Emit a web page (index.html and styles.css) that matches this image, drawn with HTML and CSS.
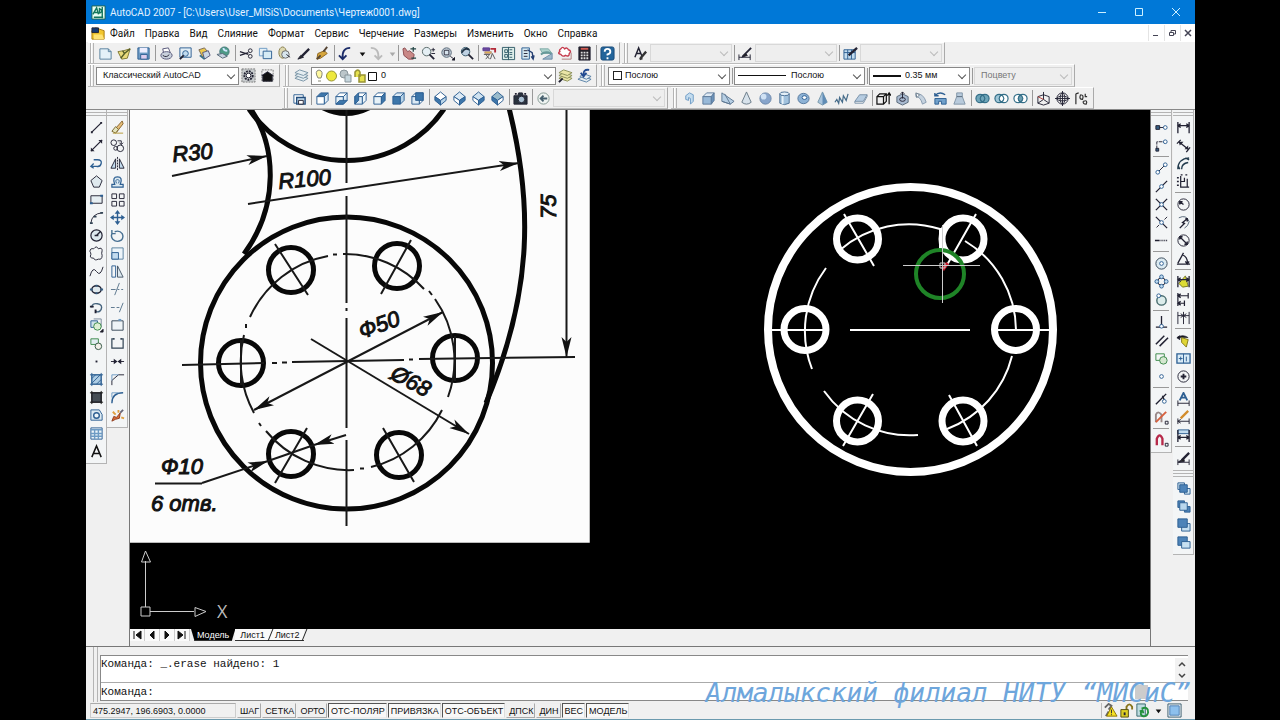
FILE: index.html
```html
<!DOCTYPE html>
<html lang="ru">
<head>
<meta charset="utf-8">
<title>AutoCAD 2007</title>
<link rel="stylesheet" href="styles.css">
</head>
<body>
<div class="app">
  <header class="titlebar">
    <span class="glyph" data-icon="app"></span>
    <h1 class="title">AutoCAD 2007 - [C:\Users\User_MISiS\Documents\Чертеж0001.dwg]</h1>
    <div class="winbtns">
      <button aria-label="Свернуть"><svg width="10" height="10"><path d="M1 5.500h8"/></svg></button>
      <button aria-label="Развернуть"><svg width="10" height="10"><path d="M1.500 1.500h7v7h-7z"/></svg></button>
      <button aria-label="Закрыть"><svg width="10" height="10"><path d="M1 1l8 8M9 1l-8 8"/></svg></button>
    </div>
  </header>
  <nav class="menubar">
    <span class="glyph" data-icon="doc"></span>
    <button>Файл</button><button>Правка</button><button>Вид</button><button>Слияние</button><button>Формат</button><button>Сервис</button><button>Черчение</button><button>Размеры</button><button>Изменить</button><button>Окно</button><button>Справка</button>
    <div class="docbtns">
      <button aria-label="Свернуть чертеж"><svg width="8" height="8"><path d="M1 6.500h5"/></svg></button>
      <button aria-label="Восстановить чертеж"><svg width="8" height="8"><path d="M1.500 3.500h4v3h-4zM3 3V1.500h4.500V5H6"/></svg></button>
      <button aria-label="Закрыть чертеж"><svg width="8" height="8"><path d="M1 1l6 6M7 1l-6 6" stroke-width="1.500"/></svg></button>
    </div>
  </nav>
  <section class="toolrows">
    <div class="row">
      <div class="bar" data-tools="new open save | print preview publish globe | cut copy paste brush match | undo arrow redo arrowoff | pan zoom zoomwin zoomprev | props center palette sheet markup calc | help"></div>
      <div class="bar">
        <span class="grp" data-tools="textstyle"></span>
        <span class="combo off w82"><select aria-label="Стиль текста" disabled><option></option></select></span><i class="sep"></i>
        <span class="grp" data-tools="dimstyle"></span>
        <span class="combo off w82"><select aria-label="Размерный стиль" disabled><option></option></select></span><i class="sep"></i>
        <span class="grp" data-tools="tablestyle"></span>
        <span class="combo off w82"><select aria-label="Стиль таблиц" disabled><option></option></select></span>
      </div>
    </div>
    <div class="row second">
      <div class="bar">
        <span class="combo w143"><select aria-label="Рабочее пространство"><option>Классический AutoCAD</option></select></span>
        <span class="grp" data-tools="gear home"></span>
      </div>
      <div class="bar gapleft">
        <span class="grp" data-tools="layers"></span>
        <span class="combo layer w245"><select aria-label="Слой"><option>0</option></select><span class="over" data-icon="layerstate"></span></span>
        <span class="grp" data-tools="layercur layerprev"></span>
      </div>
      <div class="bar">
        <span class="combo color w122"><select aria-label="Цвет"><option>Послою</option></select><i class="over swatch"></i></span><i class="sep"></i>
        <span class="combo ltype w131"><select aria-label="Тип линии"><option>Послою</option></select><i class="over thin"></i></span><i class="sep"></i>
        <span class="combo lweight w101"><select aria-label="Вес линии"><option>0.35 мм</option></select><i class="over thick"></i></span><i class="sep"></i>
        <span class="combo off w98"><select aria-label="Стиль печати" disabled><option>Поцвету</option></select></span>
      </div>
    </div>
    <div class="row third">
      <div class="bar">
        <span class="grp" data-tools="views | vtop vbottom vleft vright vfront vback | iso1 iso2 iso3 iso4 | camera | prevview"></span>
        <span class="combo off w112"><select aria-label="Вид" disabled><option></option></select></span>
      </div>
      <div class="bar" data-tools="polysolid box wedge cone sphere cylinder torus pyramid helix planar | extrude presspull sweep revolve loft | union subtract intersect | move3d rotate3d align3d"></div>
    </div>
  </section>
  <main class="work">
    <div class="dock left">
      <div class="vbar" data-tools="line xline pline polygon rect arc circle cloud spline ellipse earc insert block point hatch gradient region table mtext"></div>
      <div class="vbar" data-tools="erase copyobj mirror offset array move rotate scale stretch trim extend breakpt break join chamfer fillet explode"></div>
    </div>
    <div class="drawing">
      <svg class="canvas" viewBox="130 110 1020 519" preserveAspectRatio="xMinYMin slice" role="img" aria-label="Чертеж">
        <defs>
          <marker id="arr" markerUnits="userSpaceOnUse" markerWidth="22" markerHeight="12" refX="20" refY="6" orient="auto-start-reverse"><path d="M0 1l20 5L0 11l5-5z" fill="#111"/></marker>
        </defs>
        <path d="M130 110h459v432H130z" fill="#fcfcfc"/>
        <path d="M130 542.500h459.500V110" fill="none" stroke="#bbb"/>
        <g fill="none" stroke="#080808" stroke-width="5">
          <path d="M249 109a118 118 0 0 0 195 0"/>
          <path d="M320 108q26 14 52 0z" fill="#080808" stroke-width="2"/>
          <path d="M250 108C276 145 280 205 244 254"/>
          <circle cx="346.500" cy="363" r="146"/>
          <path d="M509 108C532 200 534 290 486 403"/>
          <circle cx="291" cy="270" r="22.500"/><circle cx="397" cy="266" r="22.500"/><circle cx="455" cy="358" r="22.500"/>
          <circle cx="399" cy="455" r="22.500"/><circle cx="291" cy="454" r="22.500"/><circle cx="241" cy="363" r="22.500"/>
        </g>
        <g fill="none" stroke="#181818" stroke-width="2">
          <path d="M346.500 110v73M346.500 196v107M346.500 308v3M346.500 318v110M346.500 440v86"/>
          <path d="M182 365l82-2M272 363h5M282 362.500h5M292 362l112-2M409 359.500h4M419 359l156-2"/>
          <path d="M250 317a107 107 0 0 1 78-61M333 254.500h4M343 254a107 107 0 0 1 81 35M429 291l3 4M435 299a107 107 0 0 1 13 98M442 410a107 107 0 0 1-71 57M364 468.500h-4M354 470a107 107 0 0 1-88-39M261 426l-2-3M254 413a107 107 0 0 1-10-78M246 328v-4"/>
          <path d="M275 244l33 51M411 240l-30 54M275 483l32-55M383 428l31 54M241 340v45M455 336v45"/>
          <path d="M172 176l95-20" marker-end="url(#arr)"/>
          <path d="M248 204l271-41" marker-end="url(#arr)"/>
          <path d="M202 483l66-22" marker-end="url(#arr)"/>
          <path d="M346 435l-32 10" marker-end="url(#arr)"/>
          <path d="M566.500 110v247" marker-end="url(#arr)"/>
          <path d="M155 483.500h47M268 461l46-16"/>
          <path d="M254 410l189-98" marker-start="url(#arr)" marker-end="url(#arr)"/>
          <path d="M311 339l158 95" marker-end="url(#arr)"/>
        </g>
        <g class="dims">
          <text transform="translate(173 162) rotate(-5)">R30</text>
          <text transform="translate(279 189) rotate(-5)">R100</text>
          <text transform="translate(556 219) rotate(-90)">75</text>
          <text transform="translate(362 339) rotate(-20)">Ф50</text>
          <text transform="translate(389 378) rotate(28)">Ø68</text>
          <text x="161" y="474">Ф10</text>
          <text x="151" y="511">6 отв.</text>
        </g>
        <g fill="none" stroke="#fff">
          <circle cx="910.500" cy="329.500" r="142.500" stroke-width="8"/>
          <g stroke-width="7"><circle cx="857.500" cy="239" r="21"/><circle cx="963" cy="239" r="21"/><circle cx="1015.500" cy="329.500" r="21"/><circle cx="963" cy="421" r="21"/><circle cx="857.500" cy="421" r="21"/><circle cx="805" cy="329.500" r="21"/></g>
          <g stroke-width="2">
            <path d="M840 250a105 105 0 0 1 100-21M965 241a105 105 0 0 1 51 89M1012 356a105 105 0 0 1-65 73M918 435a105 105 0 0 1-94-44M812 369a105 105 0 0 1 14-101"/>
            <path d="M768 330h59M850 330h120M998 330h58"/>
            <path d="M844 214l30 52M976 214l-29 51M873 394l-30 52M949 395l28 51M940 228v22"/>
          </g>
        </g>
        <circle cx="940" cy="274" r="24" fill="none" stroke="#1f8427" stroke-width="4"/>
        <path d="M941 268l5-6 3 2-5 7z" fill="#c8182c"/>
        <path d="M903 265.500h77M942.500 225v78M940 263h5v5h-5z" fill="none" stroke="#ccc"/>
        <path d="M145.500 607v-46M150 611.500h44M141 607h9v9h-9zM145.500 551l-4 11h9zM206 611.500l-11-4v9z" fill="none" stroke="#ccc"/>
        <text x="217" y="618" class="axis">X</text>
      </svg>
      <div class="tabs">
        <button class="nav" aria-label="Первый"><svg width="10" height="10"><path d="M2 1v8M9 1v8L4 5z"/></svg></button>
        <button class="nav" aria-label="Назад"><svg width="10" height="10"><path d="M7 1v8L3 5z"/></svg></button>
        <button class="nav" aria-label="Вперед"><svg width="10" height="10"><path d="M3 1v8l4-4z"/></svg></button>
        <button class="nav" aria-label="Последний"><svg width="10" height="10"><path d="M8 1v8M1 1v8l5-4z"/></svg></button>
        <button class="tab on">Модель</button><button class="tab">Лист1</button><button class="tab">Лист2</button>
      </div>
    </div>
    <div class="dock right">
      <div class="vbar" data-tools="track from | endp midp inter appint ext | cen quad tan | perp par ins node | near none | osnap"></div>
      <div class="vstack">
        <div class="vbar" data-tools="dlin dalign darc dord | drad djog ddia dang | quick dbase dcont | leader toler cmark | dedit dtedit dupd | dstyle"></div>
        <div class="vbar" data-tools="front back above under"></div>
      </div>
    </div>
  </main>
  <section class="command">
    <div class="cmdbox">
      <div class="history"><span>Команда: _.erase найдено: 1</span>
        <div class="scroll"><button aria-label="Вверх"><svg width="8" height="6"><path d="M1 5l3-3 3 3"/></svg></button><button aria-label="Вниз"><svg width="8" height="6"><path d="M1 1l3 3 3-3"/></svg></button></div>
      </div>
      <div class="prompt"><label for="cmd">Команда:</label><input id="cmd" type="text"><i class="thumb"></i></div>
    </div>
    <p class="watermark">Алмалыкский филиал НИТУ “МИСиС”</p>
  </section>
  <footer class="status">
    <output class="coords">475.2947, 196.6903, 0.0000</output>
    <button>ШАГ</button><button>СЕТКА</button><button>ОРТО</button><button class="down">ОТС-ПОЛЯР</button><button class="down">ПРИВЯЗКА</button><button class="down">ОТС-ОБЪЕКТ</button><button>ДПСК</button><button>ДИН</button><button class="down">ВЕС</button><button class="down">МОДЕЛЬ</button>
    <div class="tray" data-tools="warn lock refresh arrow clean"></div>
  </footer>
</div>
<script src="icons.js"></script>
</body>
</html>
```
FILE: styles.css
```css
* { box-sizing: border-box; }
body { margin: 0; background: #000; font-family: Roboto, "Open Sans", sans-serif; font-size: 10px; color: #111; }
button { border: 0; padding: 0; margin: 0; background: none; font: inherit; color: inherit; white-space: nowrap; }
svg { display: block; }
.app { height: 100vh; margin: 0 85px 0 86px; display: flex; flex-direction: column; background: #f0f0f0; overflow: hidden; }

.titlebar { height: 24px; flex: none; display: flex; align-items: center; gap: 3px; padding: 0 1px 0 5px; background: #0078d7; color: #e4f2ff; }
.title { margin: 0; font-size: 10px; font-weight: 400; white-space: nowrap; }
.winbtns { margin-left: auto; display: flex; }
.winbtns button { width: 37px; display: flex; justify-content: center; }
.winbtns svg { fill: none; stroke: #cdf0ff; }
.glyph { width: 16px; }

.menubar { height: 18px; flex: none; display: flex; align-items: center; gap: 10px; padding-left: 5px; background: #fff; }
.menubar .glyph { margin-right: -7px; }
.docbtns { margin-left: auto; display: flex; gap: 1px; }
.docbtns button { width: 15px; height: 16px; display: grid; place-items: center; border-left: 1px solid #e4e4e4; }
.docbtns svg { fill: none; stroke: #445; }

.toolrows { flex: none; display: flex; flex-direction: column; padding-left: 2px; border-bottom: 1px solid #888; }
.row { display: flex; height: 22px; }
.row.second { height: 23px; }
.row.third { padding-left: 194px; }
.bar { display: flex; align-items: center; height: 100%; padding: 0 2px 0 8px; border-right: 1px solid #aaa; border-bottom: 1px solid #bbb; border-top: 1px solid #fff; background: linear-gradient(90deg, transparent 2px, #b4b4b4 2px, #b4b4b4 3px, #fff 3px, #fff 4px, transparent 4px, transparent 5px, #b4b4b4 5px, #b4b4b4 6px, transparent 6px); }
.bar + .bar { margin-left: 2px; padding-left: 9px; }
.bar.gapleft { margin-left: 3px; }
.third .bar + .bar { margin-left: 3px; }
.grp { display: flex; }
.tool { width: 19px; height: 18px; display: grid; place-items: center; flex: none; }
.tool.slim { width: 11px; }
.icon { width: 15px; height: 15px; fill: none; stroke: #223; }
.sep { width: 1px; height: 16px; margin: 0 1px 0 2px; background: #999; flex: none; }

.combo { position: relative; display: flex; height: 18px; flex: none; }
.combo select { appearance: none; width: 100%; height: 18px; padding: 0 14px 0 6px; border: 1px solid #888; border-radius: 0; background: #fff; color: #111; font: 9px/15px "Liberation Sans", sans-serif; }
.combo::after { content: ""; position: absolute; right: 5px; top: 5px; width: 5px; height: 5px; border: solid #555; border-width: 0 1px 1px 0; transform: rotate(45deg); }
.combo.off select { background: #eee; border-color: #d8d8d8; color: #777; opacity: 1; }
.combo.off::after { border-color: #bbb; }
.over { position: absolute; left: 3px; top: 1px; pointer-events: none; }
.combo.layer select { padding-left: 69px; }
.combo.color select { padding-left: 16px; }
.combo.ltype select { padding-left: 56px; }
.combo.lweight select { padding-left: 35px; }
.swatch { top: 4px; left: 5px; width: 9px; height: 9px; border: 1px solid #222; }
.thin { top: 8px; left: 4px; width: 48px; height: 1px; background: #111; }
.thick { top: 8px; left: 4px; width: 28px; height: 2px; background: #111; }
.w82 { width: 82px; } .w98 { width: 98px; } .w101 { width: 101px; } .w112 { width: 112px; }
.w122 { width: 122px; } .w131 { width: 131px; } .w143 { width: 143px; } .w245 { width: 245px; }

.work { flex: 1; min-height: 0; display: flex; }
.dock { flex: none; display: flex; align-items: flex-start; }
.left { width: 44px; border-right: 1px solid #777; }
.right { width: 45px; border-left: 1px solid #777; gap: 1px; }
.vbar { width: 21px; display: flex; flex-direction: column; align-items: center; padding: 8px 0 3px; border-right: 1px solid #b4b4b4; border-bottom: 1px solid #b4b4b4; background: linear-gradient(180deg, transparent 2px, #b4b4b4 2px, #b4b4b4 3px, transparent 3px, transparent 5px, #b4b4b4 5px, #b4b4b4 6px, transparent 6px) #f3f5f6; }
.vbar .sep { width: 16px; height: 1px; margin: 2px 0; }
.drawing { flex: 1; min-width: 0; display: flex; flex-direction: column; }
.canvas { flex: 1; min-height: 0; width: 100%; background: #000; }
.dims { font: italic 22px "Liberation Sans", sans-serif; fill: #111; stroke: #111; stroke-width: 1; }
.axis { font: 18px "Open Sans", sans-serif; fill: #bbb; }
.tabs { height: 17px; flex: none; display: flex; align-items: flex-start; font: 9px/12px "Liberation Sans", sans-serif; }
.nav { width: 15px; height: 12px; display: grid; place-items: center; border-right: 1px solid #ccc; background: #fafafa; }
.nav svg { fill: #111; stroke: #111; stroke-width: 1px; }
.tab { position: relative; height: 12px; padding: 0 5px; background: #fafafa; border-bottom: 1px solid #333; }
.tab::after { content: ""; position: absolute; right: -1px; top: 0; width: 1px; height: 12px; background: #222; transform: skewX(-22deg); z-index: 1; }
.tab.on { margin-left: 1px; padding: 0 6px; background: #000; color: #fff; clip-path: polygon(0 0, 100% 0, 92% 100%, 8% 100%); }

.command { position: relative; flex: none; border-top: 1px solid #777; padding: 8px 7px 1px 14px; background: linear-gradient(90deg, transparent 7px, #b4b4b4 7px, #b4b4b4 8px, transparent 8px, transparent 11px, #b4b4b4 11px, #b4b4b4 12px, transparent 12px); }
.cmdbox { border: 1px solid #888; border-width: 1px 0 1px 1px; background: #fff; font: 11px "Liberation Mono", monospace; }
.history { height: 27px; display: flex; justify-content: space-between; padding-top: 2px; border-bottom: 1px solid #aaa; }
.scroll { width: 13px; display: flex; flex-direction: column; justify-content: space-around; align-items: center; background: #f2f2f2; }
.scroll svg { fill: none; stroke: #444; stroke-width: 1.500px; }
.prompt { height: 17px; display: flex; align-items: center; }
.prompt input { flex: 1; border: 0; padding: 0; background: none; font: inherit; outline: 0; }
.thumb { width: 13px; height: 14px; margin-right: 40px; background: #ccc; }
.watermark { position: absolute; right: 4px; top: 31px; margin: 0; font: italic 26px/30px "DejaVu Sans Mono", monospace; color: #6ea6dc; white-space: nowrap; z-index: 2; }

.status { height: 18px; flex: none; display: flex; align-items: center; gap: 1px; padding: 1px 4px 1px 4px; border-bottom: 1px solid #6b9aae; font: 9px/14px "Liberation Sans", sans-serif; }
.status > button { height: 15px; padding: 0 1px 0 2px; border: 1px solid #eee; border-right-color: #aaa; border-bottom-color: #aaa; }
.status > .down { border-color: #555 #ddd #eee #555; background: #f8f8f8; }
.coords { width: 146px; height: 15px; padding-left: 2px; border: 1px solid #ccc; border-top-color: #aaa; }
.tray { margin-left: auto; margin-right: 9px; display: flex; align-items: center; height: 15px; border-left: 1px solid #bbb; }
.tray .tool { width: 16px; }
```
FILE: icons.js
```js
// Icon artwork on a 16 x 16 grid; default stroke and no fill come from .icon.
const L = '#c3dcef', B = '#2d5f92', M = '#6d9bc4', G = '#3b8a4a';
const cube = (top, left, right) =>
  `<g stroke="${B}"><path d="M2 6l4-4h8l-4 4z" fill="${top}"/><path d="M2 6h8v8H2z" fill="${left}"/><path d="M10 6l4-4v8l-4 4z" fill="${right}"/></g>`;
const iso = (a, b, c) =>
  `<g stroke="${B}"><path d="M8 1l6 5-6 4-6-4z" fill="${a}"/><path d="M2 6l6 4v5L2 10z" fill="${b}"/><path d="M14 6l-6 4v5l6-5z" fill="${c}"/></g>`;
const rings = (a, b, mid) =>
  `<g stroke="#356f88" stroke-width="1.3"><circle cx="5.500" cy="8" r="4.500" fill="${a}"/><circle cx="10.500" cy="8" r="4.500" fill="${b}"/><path d="M8 4q5 4 0 8-5-4 0-8" fill="${mid}"/></g>`;
const dim = '<path d="M2 2v12M14 2v12M2 6h12M5 4L2 6l3 2M11 4l3 2-3 2" stroke-width="1.400"/>';
const dot = (x, y, c = '#fff') => `<circle cx="${x}" cy="${y}" r="2" fill="${c}" stroke="${B}"/>`;
const order = (a, b) =>
  `<g stroke="${B}"><path d="M2 2h7v7H2z" fill="${a}"/><path d="M9 8h6v6H9z" fill="${a}"/><path d="M4 4h8v8H4z" fill="${b}"/></g>`;

const art = {
  app: '<path d="M1 1h14v14H1z" fill="#e8fff4" stroke="#18604c"/><path d="M2 10l4-7 2 7M3 8h4M9 3v6M9 4q5 2 0 5M3 13h10M12 2v12" stroke="#13775c" stroke-width="1.500"/>',
  doc: '<path d="M1 5l4-3 9 3v9H1z" fill="#f2c62d" stroke="#a87a10"/><path d="M1 2h7v5H1z" fill="#173a70"/><path d="M3 9h9l2 5H3z" fill="#ffe374" stroke="none"/>',
  new: `<path d="M2 3h9l3 3v8H2z" fill="#e4f1f8" stroke="#567f9d"/><path d="M11 3v3h3" stroke="#567f9d"/>`,
  open: '<path d="M1 6l6-1 7-2-3 10-6 1z" fill="#e9da7c" stroke="#7f7732"/><path d="M4 13l4-5 6-5M6 5l2 3" stroke="#555d28" stroke-width="1.500"/>',
  save: `<path d="M2 2h12v12H2z" fill="${M}" stroke="${B}"/><path d="M4 2h8v5H4z" fill="#eef" stroke="none"/><path d="M5 9h7v5H5z" fill="#dce" stroke="${B}"/>`,
  print: '<path d="M4 3l6-1 2 5-7 1z" fill="#fff" stroke="#557"/><ellipse cx="8" cy="10" rx="6" ry="4" fill="#c8d0dc" stroke="#557"/><path d="M4 10q4 3 7-1"/>',
  preview: `<path d="M2 2h12v10H2z" fill="#e3eef6" stroke="${B}"/><circle cx="8" cy="8" r="3" fill="${L}" stroke="${B}"/><path d="M6 10l-4 4" stroke-width="2"/>`,
  publish: '<path d="M2 4l6-2 4 5-6 5z" fill="#ecc94e" stroke="#765"/><path d="M6 7l6-2 2 5-6 4z" fill="#cad7e5" stroke="#557"/><path d="M3 10l5 4" stroke="#356f88" stroke-width="2"/>',
  globe: '<circle cx="9" cy="6" r="5" fill="#4d9a86" stroke="#44777c"/><path d="M1 9l6 4 5-2-5-3z" fill="#c6d3e0" stroke="#567"/><path d="M8 2q0 3 4 3" stroke="#cfe6ff" stroke-width="2"/>',
  cut: '<path d="M1 6l9 3M1 10l9-3" stroke-width="1.300"/><circle cx="12" cy="5" r="2"/><circle cx="12" cy="11" r="2"/>',
  copy: `<path d="M1.500 2.500h8v8h-8z" fill="#e4f0f7" stroke="${M}"/><path d="M5.500 5.500h9v8h-9z" fill="#d5ebf5" stroke="${B}"/>`,
  paste: '<ellipse cx="6" cy="7" rx="4" ry="6" fill="#ddd8b0" stroke="#867d4b"/><circle cx="9" cy="9" r="4" fill="#d7e5ed" stroke="#666"/><path d="M10 9l4 3"/>',
  brush: '<path d="M2 14l3-4 3 2z" fill="#222"/><path d="M6 11l8-8" stroke-width="2.500"/>',
  match: '<path d="M3 8l7-3 3 3-7 5-4 1z" fill="#d6a63c" stroke="#8d6520"/><path d="M9 6l4-5M2 14l4-4" stroke="#543" stroke-width="2"/>',
  undo: '<path d="M13 2Q4 2 5 13M1 10l4 4 4-4" stroke="#1c2c68" stroke-width="2"/>',
  redo: '<path d="M3 2q9 0 8 11M7 10l4 4 4-4" stroke="#bbb" stroke-width="2"/>',
  arrow: '<path d="M5 7h6l-3 4z" fill="#111" stroke="none"/>',
  arrowoff: '<path d="M5 7h6l-3 4z" fill="#aaa" stroke="none"/>',
  pan: '<path d="M1 3l2-1 3 4 2-1 5 4-1 5H7L2 10z" fill="#c98886" stroke="#8b4c50"/><path d="M12 1v5M9 3h6M10 13h5" stroke="#244" stroke-width="1.300"/>',
  zoom: '<circle cx="6" cy="6" r="4.500" fill="#e5eff4" stroke="#566"/><path d="M9 9l5 5" stroke-width="2"/><path d="M11 4h4M13 2v4M11 8h4"/>',
  zoomwin: '<circle cx="7" cy="7" r="5" fill="#d7e3ed" stroke="#456"/><path d="M4.500 4.500h5v5h-5zM11 11l4 3"/><path d="M13 15h3v-3z" fill="#111"/>',
  zoomprev: '<circle cx="7" cy="6" r="4.500" fill="#bed1e3" stroke="#356"/><path d="M10 9l5 5" stroke-width="2"/><path d="M3 7q3-6 8-3" stroke="#234" stroke-width="2"/>',
  props: '<path d="M1 2h7v3H1z" fill="#6c48a0" stroke="#5a3d90"/><path d="M9 3h5v4" stroke="#b42c3a" stroke-width="2"/><path d="M2 9h6M4 9l4 5M9 8l-5 6M11 8l-2 6M11 8l3 6" stroke="#555"/><path d="M3 6h7v2H3z" fill="#e0b34d" stroke="#b98"/>',
  center: `<path d="M1.500 1.500h13v13h-13z" fill="#deeeea" stroke="#315b68"/><path d="M4 4h3v3H4zM4 9h3v3H4zM9 4h3M9 7h3M9 9h3M9 12h3M8 1v14" stroke="#315b68"/>`,
  palette: `<path d="M2 2h8v12H2z" fill="#d7e9f2" stroke="${B}"/><path d="M4 5h4M4 8h4M4 11h4"/><path d="M8 4l5 3 1 6M12 11l2 3 1-4" stroke="#263f72" stroke-width="1.500"/>`,
  sheet: '<path d="M1 3h9l4 5H4z" fill="#acd2cc" stroke="#7faaa6"/><path d="M4 14h10V8z" fill="#9fbacb" stroke="#6b8ba6"/><path d="M2 9q5-4 11-1" stroke="#699" stroke-width="2"/>',
  markup: '<path d="M3 3q2-3 4 0 3-2 4 1 4 1 1 4 0 4-4 2-3 2-5-1-4-1-1-3-1-2 1-3z" fill="#fff" stroke="#c53a4c" stroke-width="1.500"/><path d="M4 14h10V7" stroke="#a77"/>',
  calc: '<path d="M2 1h12v14H2z" fill="#252129"/><path d="M4 3h8" stroke="#d05a52" stroke-width="2"/><path d="M4 7h8M4 10h8M4 13h8" stroke="#ddd" stroke-width="2" stroke-dasharray="2 1"/>',
  help: '<rect x="1" y="1" width="14" height="14" rx="2" fill="#23659b" stroke="#194a78"/><path d="M5 6q0-3 3-3t3 3q0 2-3 3v1M8 12v2" stroke="#fff" stroke-width="2"/>',
  textstyle: '<path d="M2 12L6 2l4 10M4 8h5" stroke-width="1.500"/><path d="M8 13l6-7M7 14l3-1" stroke="#333" stroke-width="2.500"/>',
  dimstyle: '<path d="M1 9v6M13 9v6M1 12h12"/><path d="M5 11l9-9" stroke-width="2"/><path d="M4 12l4-4 2 2z" fill="#222"/>',
  tablestyle: `<path d="M1 4h12v10H1z" fill="${L}" stroke="${B}"/><path d="M1 7h12M5 4v10M9 4v10" stroke="${B}"/><path d="M6 10l9-8" stroke-width="2.500"/>`,
  gear: '<path d="M1 1h14v14H1z" fill="#c8ccce" stroke="#777" stroke-dasharray="2 1"/><circle cx="8" cy="8" r="4.500" stroke-width="2" stroke-dasharray="2 1"/><circle cx="8" cy="8" r="2.500" fill="#fff"/>',
  home: '<path d="M2 2h12v12H2z" stroke="#777" stroke-dasharray="2 1"/><path d="M2 8l6-4 6 4-1 1v5H3V9z" fill="#111"/>',
  layers: '<g fill="#e5edf1" stroke="#7893a5"><path d="M1 11l5-3 9 3-5 3z"/><path d="M1 8l5-3 9 3-5 3z"/><path d="M1 5l5-3 9 3-5 3z"/></g>',
  layercur: '<g fill="#e9e4a6" stroke="#8a8f58"><path d="M1 11l5-3 9 3-5 3z"/><path d="M1 8l5-3 9 3-5 3z"/><path d="M1 5l5-3 9 3-5 3z"/></g><path d="M1 15l4-4" stroke-width="2"/>',
  layerprev: '<g fill="#e5edf1" stroke="#5780a5"><path d="M1 12l5-3 9 3-5 3z"/><path d="M3 9l4-3 8 3-5 3z"/></g><path d="M13 2Q6 1 7 8M4 5l3 4 3-4" stroke="#224b91" stroke-width="2"/>',
  views: `<path d="M2 4h10v9H2z" fill="#fff" stroke="${B}"/><path d="M5 7h9v7H5z" fill="${L}" stroke="#234d7c" stroke-width="1.500"/><path d="M7 10h5v4H7z" fill="#fff"/>`,
  vtop: cube('#3d76aa', '#fff', '#dceaf5'), vbottom: cube('#fff', '#e8f2f8', '#dceaf5') + `<path d="M2 14l4-4h8l-4 4z" fill="#3d76aa" stroke="${B}"/>`,
  vleft: cube('#fff', '#dceaf5', '#edf5fa') + `<path d="M2 6l4-4v8l-4 4z" fill="#3d76aa" stroke="${B}"/>`, vright: cube('#fff', '#e8f2f8', '#3d76aa'),
  vfront: cube('#dceaf5', '#3d76aa', '#b9d4e8'), vback: cube('#fff', '#dceaf5', '#fff') + `<path d="M6 2h8v8H6z" fill="#3d76aa" stroke="${B}"/>`,
  iso1: iso('#fff', '#3d76aa', '#b9d4e8'), iso2: iso('#dceaf5', '#fff', '#3d76aa'), iso3: iso('#cfe2f0', '#fff', '#3d76aa'), iso4: iso('#9bc', '#3d76aa', '#fff'),
  camera: '<path d="M1 5h4l1-3h4l1 3h4v9H1z" fill="#28323d"/><circle cx="9" cy="9" r="3.500" fill="#a9c0d2"/><path d="M2 3h2M12 3h2" stroke-width="2"/>',
  prevview: '<circle cx="8" cy="8" r="6" fill="#eef3f1" stroke="#81958f"/><path d="M12 8H5M8 5L5 8l3 3" stroke="#47606e" stroke-width="2"/>',
  polysolid: `<path d="M4 5l4-3 4 2v7l-3 3V8L7 7v3l-3-1z" fill="${L}" stroke="${M}"/>`,
  box: `<path d="M2 6l4-4h8l-3 4z" fill="#dfeaf4" stroke="#5e7c9c"/><path d="M2 6h9v8H2z" fill="#98b9d8" stroke="#5e7c9c"/><path d="M11 6l3-4v8l-3 4z" fill="#6a91b9" stroke="#5e7c9c"/>`,
  wedge: `<path d="M2 2v9l9 3 4-3z" fill="#b7cfe4" stroke="#5e7892"/><path d="M2 11l9 3L5 3" stroke="#5e7892"/>`,
  cone: '<path d="M8 1l5 11q-5 4-10 0z" fill="#d7e2eb" stroke="#687986"/>',
  sphere: `<circle cx="8" cy="8" r="6" fill="#88a5cb" stroke="#6d87aa"/><circle cx="6" cy="6" r="3" fill="#cfe1f4" stroke="none"/>`,
  cylinder: `<path d="M3 3v10q5 3 10 0V3z" fill="#a2c2dd" stroke="#4b6f93"/><path d="M6 5v9" stroke="#e6f1f9" stroke-width="2"/><ellipse cx="8" cy="3" rx="5" ry="2" fill="#e4eff7" stroke="#4b6f93"/>`,
  torus: `<ellipse cx="8" cy="8" rx="6" ry="5.500" fill="#8db2d5" stroke="#55789c"/><ellipse cx="9" cy="7" rx="2.500" ry="2" fill="#fff" stroke="${B}"/>`,
  pyramid: `<path d="M8 1l5 11-5 3-5-3z" fill="#a8c4dd" stroke="#79a"/><path d="M8 1v14l5-3z" fill="#608cb5" stroke="none"/>`,
  helix: '<path d="M1 12l2-3 2 4 1-6 3 5 1-7 3 5 2-7" stroke="#456b89" stroke-width="1.300"/>',
  planar: '<path d="M2 11l5-7h8l-4 7z" fill="#b6cce1" stroke="#7890a7"/><path d="M2 11v2h9l4-7V4" stroke="#7890a7"/>',
  extrude: '<path d="M1 6l3-3h7v8l-3 3H1zM1 6h7v8M8 6l3-3M14 2v12M12 5l2-3 2 3" stroke="#111" stroke-width="1.300"/>',
  presspull: `<path d="M2 6l6-3 6 3v6l-6 3-6-3z" fill="#a9bad0" stroke="#567"/><path d="M5 9a3 2 0 1 0 6 0 3 2 0 1 0-6 0M8 8V1M6 3l2-2 2 2"/>`,
  sweep: '<path d="M2 3q8-1 11 9l-4 2Q7 6 2 6z" fill="#c5d2df" stroke="#879bae"/><path d="M2 2l4 2-3 3z" fill="#fff" stroke="#678"/>',
  revolve: `<path d="M2 8h12v6H9v-3H6v3H2z" fill="#70a0ca" stroke="${B}"/><path d="M2 5q5-5 11-1M2 2v3h4" stroke="${B}" stroke-width="1.500"/>`,
  loft: '<path d="M5 2h6v4l3 8H2l3-8z" fill="#b8cadb" stroke="#8094a6"/><path d="M5 6h6" stroke="#567"/>',
  union: rings('#6ea5b9', '#6ea5b9', '#6ea5b9'), subtract: rings('#9fc6d7', '#fff', '#fff'), intersect: rings('#fff', '#fff', '#6a9db0'),
  move3d: '<path d="M8 9V1M8 9l-6 4M8 9l6 4M2 6v7l6 2 6-2V6L8 4z"/><path d="M8 9l-6-3" stroke="#b43c32"/>',
  rotate3d: '<circle cx="8" cy="8" r="6"/><ellipse cx="8" cy="8" rx="6" ry="2.500"/><ellipse cx="8" cy="8" rx="2.500" ry="6"/><path d="M8 0v16M0 8h16"/>',
  align3d: '<path d="M2 3v11M2 3l3-1M7 4q4 0 2 5-4 0-2-5M10 11q5-2 3 3-4 0-3-3M12 3v3h2" stroke="#333" stroke-width="1.300"/>',
  line: '<path d="M3 13L13 3" stroke-width="1.300"/><path d="M2 13h2M12 3h2" stroke-width="2"/>',
  xline: '<path d="M2 14L14 2" stroke-width="1.400"/><path d="M2 14v-4l4 4zM14 2v4l-4-4z" fill="#223" stroke="none"/>',
  pline: `<path d="M5 4h4q5 0 4 4t-5 3H2M5 8l-3 3 3 2" stroke="${B}" stroke-width="1.400"/>`,
  polygon: '<path d="M8 2l6 5-3 7H5L2 7z" fill="#dfe9ee"/>',
  rect: `<path d="M2 4h12v8H2z" fill="#e6eef2"/><path d="M1 12h3M12 4h3" stroke="${B}" stroke-width="2"/>`,
  arc: '<path d="M2 14Q3 4 14 3"/><path d="M1 14h3M5 7h3M12 3h3" stroke="#345" stroke-width="2"/>',
  circle: '<circle cx="8" cy="8" r="6" fill="#dce8ee" stroke-width="1.300"/><path d="M8 8l4-4M6 8h4" stroke-width="1.500"/>',
  cloud: '<path d="M5 3q3-4 5 0 4-2 4 2-1 3 0 5 0 5-4 4-4 2-5-1-5 0-3-4 0-2-1-3 0-4 4-3z"/>',
  spline: '<path d="M1 13q3-11 7-5t7-5"/>',
  ellipse: '<ellipse cx="8" cy="8" rx="5" ry="4" fill="#dfe8ec" stroke-width="1.500"/><path d="M8 3v2M8 11v2M1 8h3M12 8h3" stroke="#345d81" stroke-width="2"/>',
  earc: '<path d="M3 8Q3 3 9 4t4 6q-2 4-6 2" stroke="#46647e" stroke-width="1.500"/><path d="M1 7h4M7 10v4" stroke-width="2"/>',
  insert: `<path d="M2 3h7v7H2z" fill="#cfe4ec" stroke="${B}"/><path d="M5 1h8v9" stroke="#789"/><circle cx="9" cy="9" r="4" fill="#dcefd3" stroke="${G}"/><path d="M12 15h3v-3z" fill="#111"/>`,
  block: `<path d="M2 3h8v6H2z" fill="#e1edf1" stroke="${G}"/><circle cx="10" cy="11" r="3.500" fill="#f0eee7" stroke="#354"/>`,
  point: '<path d="M7 8h2" stroke-width="2"/>',
  hatch: `<path d="M3 3h10v10H3z" fill="#adcde5" stroke="${B}"/><path d="M1 3h14M3 1v14M1 13h14M13 1v14M3 12l9-9M3 7l4-4M8 13l5-5" stroke="${B}"/>`,
  gradient: '<path d="M3 3h10v10H3z" fill="#454d55"/><path d="M1 3h14M3 1v14M1 13h14M13 1v14" stroke="#111"/>',
  region: `<path d="M2 2h9l3 5v6H2z" fill="#dceaf2" stroke="${B}"/><circle cx="8" cy="8" r="3" fill="#eef6f9" stroke="${B}" stroke-width="1.500"/>`,
  table: `<path d="M2 2h12v12H2z" fill="#edf5fa" stroke="${B}"/><path d="M2 4h12M2 8h12M2 11h12M6 4v10M10 4v10" stroke="${M}" stroke-width="1.500"/>`,
  mtext: '<path d="M3 14L8 2l5 12M5 10h6" stroke="#111" stroke-width="1.600"/>',
  erase: '<path d="M5 10l8-9 1 3-7 9z" fill="#e5be79" stroke="#87632c"/><path d="M2 12l4-5 3 3-3 4z" fill="#e4e4bb" stroke="#763"/><path d="M3 14h11" stroke="#b59835"/>',
  copyobj: '<circle cx="4" cy="5" r="3"/><circle cx="11" cy="11" r="3.500"/><circle cx="6" cy="11" r="2"/><path d="M8 3h4v4M10 5l2 2 2-2"/>',
  mirror: `<path d="M6 3v10H1zM10 3v10h5z" fill="${L}"/><path d="M8 1v14" stroke-dasharray="2 1"/>`,
  offset: `<path d="M2 14h12v-3h-3q3-8-3-8T5 11H2z" fill="#dceaf2" stroke="${B}" stroke-width="1.300"/><path d="M7 10q-2-4 1-4t1 4" stroke="${B}"/>`,
  array: '<path d="M2 2h5v5H2zM10 2h5v5h-5zM2 10h5v5H2zM10 10h5v5h-5z"/>',
  move: `<path d="M8 2v12M2 8h12" stroke="${B}" stroke-width="1.500"/><path d="M8 0l3 4H5zM8 16l3-4H5zM0 8l4-3v6zM16 8l-4-3v6z" fill="${B}" stroke="none"/>`,
  rotate: '<path d="M5 4q5-2 8 2 2 4-1 7-5 3-9-1-3-4 0-7M2 2v4h4" stroke="#477092" stroke-width="1.500"/>',
  scale: `<path d="M2 2h12v12H2z" fill="#edf5fa" stroke="#567f9d"/><path d="M2 7h7v7H2z" fill="${L}" stroke="${B}"/>`,
  stretch: `<path d="M2 2h4v12H2z" stroke="${B}"/><path d="M8 2v12h6z" fill="#dce8ef" stroke="#456"/>`,
  trim: '<path d="M1 8h5M8 8h2M12 8h2M10 1L5 14" stroke="#57738b"/>',
  extend: '<path d="M1 8h4M7 8h3M14 3l-4 10" stroke="#57738b"/>',
  breakpt: `<path d="M2 3h12v10H2z" fill="#eef4f7" stroke="#345"/><path d="M9 2h3" stroke="${M}" stroke-width="2"/>`,
  break: '<path d="M5 3H2v10h12V3h-3M4 2v2M12 2v2" stroke="#345" stroke-width="1.300"/>',
  join: '<path d="M1 8h5M10 8h5"/><path d="M4 5l4 3-4 3zM12 5L8 8l4 3z" fill="#223" stroke="none"/>',
  chamfer: `<path d="M2 14V9l7-6h6"/><path d="M2 9V3h7" stroke="${M}"/>`,
  fillet: `<path d="M2 14Q2 3 14 3" stroke="${B}" stroke-width="1.500"/><path d="M2 8V3h7" stroke="${M}"/>`,
  explode: '<path d="M2 14l2-5 3 1 4-5-1 6-4 1z" fill="#d96a33" stroke="#8d3d20"/><path d="M3 4l3 3M9 2v3M12 10l3 1" stroke="#e0a040" stroke-width="2"/><path d="M11 5l3-3" stroke="#667" stroke-width="2"/>',
  track: '<path d="M4 8h7"/><path d="M2 6h4v4H2z" fill="#345d81"/>' + dot(12, 8),
  from: '<path d="M3 12V4h8" stroke-dasharray="4 1"/><path d="M2 11h3v3H2z" fill="#345d81"/>' + dot(12, 4),
  endp: '<path d="M4 12l7-7"/>' + dot(4, 12) + dot(12, 4), midp: '<path d="M2 14L14 2" stroke-width="1.400"/>' + dot(8, 8),
  inter: '<path d="M2 2l12 12M14 2L2 14" stroke-width="1.400"/>' + dot(8, 8), appint: '<path d="M2 2l12 12" stroke-width="1.400"/><path d="M14 2L2 14" stroke-dasharray="4 2"/>' + dot(8, 8),
  ext: '<path d="M1 8h5M7 8h1M9 8h1M11 8h1M13 8h1" stroke-width="1.500"/>',
  cen: `<circle cx="8" cy="8" r="6" fill="#dbeaf1" stroke="#345"/>` + dot(8, 8),
  quad: '<circle cx="8" cy="8" r="4"/>' + dot(8, 3, L) + dot(8, 13, L) + dot(3, 8, L) + dot(13, 8, L),
  tan: '<circle cx="8" cy="9" r="5" fill="#dceceb" stroke="#456a6c" stroke-width="1.500"/>' + dot(5, 4),
  perp: '<path d="M8 1v11M2 13h12" stroke-width="1.400"/>' + dot(8, 12), par: '<path d="M2 12l9-9M6 14l9-9" stroke-width="1.600"/>',
  ins: `<path d="M2 3h9v7H2z" stroke="${G}"/><circle cx="10" cy="10" r="4" fill="#d4e7d0" stroke="${G}"/>`, node: dot(8, 8),
  near: '<path d="M2 13L13 2M9 4l3 7" stroke-width="1.500"/>' + dot(11, 10), none: '<path d="M2 13V5q2-5 6 0v8" stroke="#988" stroke-width="2"/><path d="M2 13L13 2" stroke="#d7603d" stroke-width="2"/><path d="M12 12h3v3h-3z"/>',
  osnap: '<path d="M3 13V6q3-7 6 0v7" stroke="#b72a4a" stroke-width="2.500"/><path d="M12 11h3v3h-3z"/>',
  dlin: dim, dalign: '<path d="M5 2L1 6M15 10l-4 5M3 4l10 8" stroke-width="1.400"/><path d="M3 4h5L4 8zM13 12V8l-4 4z" fill="#223" stroke="none"/>',
  darc: '<path d="M2 14Q2 3 14 2M6 14q0-6 7-7M2 10l2 4M10 2l4 2" stroke="#223b4d" stroke-width="1.500"/>',
  dord: '<path d="M5 2v12h9M5 8h4V4M12 5v9" stroke-width="1.300"/><path d="M1 4h2M1 8h2M1 12h2M5 1h2M10 1h2" stroke-width="1.400"/>',
  drad: '<circle cx="8" cy="8" r="6"/><path d="M8 8L4 5M4 8V5h3" stroke-width="1.500"/>',
  djog: '<path d="M3 3q8-4 11 4-1 5-5 7" stroke="#567"/><path d="M4 14l5-5-2-1 5-4M10 4h2v3" stroke-width="1.500"/>',
  ddia: '<circle cx="8" cy="8" r="6"/><path d="M4 4l8 8M4 7V4h3M12 9v3H9" stroke-width="1.400"/>',
  dang: '<path d="M1 14h14M2 13L8 2M7 4q6 3 5 10M10 11l2 3 2-3" stroke-width="1.400"/>',
  quick: '<path d="M3 10l7-8 3 11-6 1z" fill="#dcdc36" stroke="#777726"/>' + dim,
  dbase: '<path d="M2 1v14M13 1v6M9 9v6M2 4h11M2 12h7M5 2L2 4l3 2M5 10l-3 2 3 2" stroke-width="1.300"/>', dcont: '<path d="M2 2v13M8 2v13M14 2v13M2 6h12M5 4l3 2-3 2M11 4L8 6l3 2"/>',
  leader: '<path d="M1 5q6-4 12 0M1 5l3-2v4z" fill="#111"/><path d="M6 5l7 2-2 8-5-5z" fill="#e0d536" stroke="#81791b"/>',
  toler: `<path d="M1 3h14v10H1z" fill="#d8ebf7" stroke="${B}" stroke-width="1.400"/><path d="M8 3v10M11 6v5M3 8h4M5 6v4" stroke="${B}"/>`,
  cmark: '<circle cx="8" cy="8" r="6"/><path d="M8 5v6M5 8h6" stroke-width="2"/>',
  dedit: `<path d="M2 9v6M14 9v6M2 12h12"/><path d="M4 9l4-8 4 8M5 6h6" stroke="${B}" stroke-width="2"/>`,
  dtedit: '<path d="M2 9v6M14 9v6M2 12h12M5 10l-3 2 3 2"/><path d="M5 9l8-8" stroke="#d28c2b" stroke-width="2.500"/>',
  dupd: `<path d="M2 2h12v4H2z" fill="${L}" stroke="${B}"/><path d="M2 2v13M14 2v13M2 10h12M5 8l-3 2 3 2M11 8l3 2-3 2" stroke-width="1.400"/>`, dstyle: '<path d="M2 9v6M14 9v6M2 12h12M5 10l-3 2"/><path d="M6 10l8-8" stroke-width="2.500"/><path d="M3 12l5-4 1 3z" fill="#222"/>',
  front: order('#d3e7f3', '#4d83b8'), back: order('#4d83b8', '#b9d7ed'), above: `<g stroke="${B}"><path d="M6 7h9v8H6z" fill="#c7e0f1"/><path d="M2 2h10v9H2z" fill="#4d83b8"/></g>`, under: `<g stroke="${B}"><path d="M2 2h10v9H2z" fill="#4d83b8"/><path d="M6 7h9v7H6z" fill="#c7e0f1"/></g>`,
  warn: '<path d="M2 5l4-4 3 2-3 4M3 14l3-5" stroke="#666" stroke-width="2"/><path d="M9 4l6 10H4z" fill="#f5df24" stroke="#8a7300"/><path d="M9 7v4M9 12v1"/>',
  lock: '<path d="M8 8V4q3-5 6 0v3" stroke="#88751a" stroke-width="2"/><path d="M2 7h8v8H2z" fill="#ddcf24" stroke="#565013"/><path d="M6 10v3" stroke-width="2"/>',
  refresh: '<path d="M2 1h9v13H2z" fill="#bedbe0" stroke="#36676c"/><path d="M7 6q7-3 7 4-1 5-6 4-3-2-1-5M5 9l3-1 1 3" stroke="#24913c" stroke-width="2"/>',
  clean: `<path d="M1 1h14v14H1z" fill="#f7fbff" stroke="#356"/><path d="M3 3h10v10H3z" fill="#8dc0ed" stroke="#4b7caf"/>`
};

const layerState = '<svg width="64" height="16" fill="none" stroke="#555"><path d="M4 10q-4-7 1-8 5 1 2 8zM4 13h3" fill="#fff9a0" stroke="#887"/><circle cx="17.500" cy="8" r="5" fill="#eee83c" stroke="#999530"/><circle cx="30" cy="6" r="4" fill="#bcc6ca" stroke="#89959b"/><path d="M31 7h6v7h-6z" fill="#c6d6dd" stroke="#89959b"/><path d="M41 9V4q3-4 5 0v5M45 7h6v7h-6z" fill="#e6e24f" stroke="#989334" stroke-width="1.500"/><path d="M54.500 4.500h8v8h-8z" fill="#fff" stroke="#111"/></svg>';
const svg = name => name === 'layerstate' ? layerState
  : `<svg class="icon" viewBox="0 0 16 16" aria-hidden="true">${art[name]}</svg>`;

document.querySelectorAll('[data-icon]').forEach(el => { el.innerHTML = svg(el.dataset.icon); });
document.querySelectorAll('[data-tools]').forEach(el => {
  el.innerHTML = el.dataset.tools.split(' ').map(n =>
    n === '|' ? '<i class="sep"></i>'
      : `<button class="tool${n.startsWith('arrow') ? ' slim' : ''}" aria-label="${n}">${svg(n)}</button>`).join('');
});
```
